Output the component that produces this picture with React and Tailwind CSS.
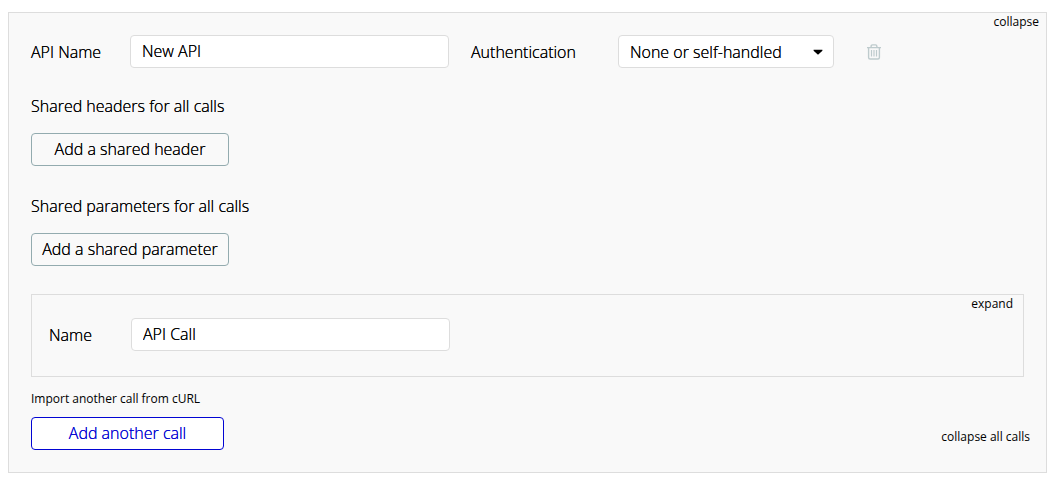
import {useState} from 'react';

export default function App() {
    const [apiName, setApiName] = useState("New API");
    const [authentication, setAuthentication] = useState("none");
    const [callName, setCallName] = useState("API Call");

    return (
        <main className="pt-3 pl-2 pr-1.5 pb-2 font-['Open_Sans','Noto_Sans',sans-serif] font-light text-base leading-5 text-black [text-shadow:0_0_0_currentColor]">
            <section className="border border-[#dddddd] bg-[#f9f9f9] pb-[22px]">
                <div className="flex justify-end pr-[7px]">
                    <TextLink>collapse</TextLink>
                </div>

                <div className="px-[22px] pt-1">
                    {/* API settings */}
                    <div className="flex items-center">
                        <label htmlFor="api-name" className="w-[99px] shrink-0">API Name</label>
                        <TextField id="api-name" value={apiName} onChange={setApiName}/>

                        <label htmlFor="authentication" className="w-[147px] shrink-0 ml-[22px]">Authentication</label>
                        <div className="grid w-[216px] shrink-0 items-center">
                            <select
                                id="authentication"
                                className="col-start-1 row-start-1 h-[33px] w-full appearance-none rounded border border-[#dddddd] bg-white pl-[11px] pr-7 [text-shadow:inherit]"
                                value={authentication}
                                onChange={(e) => setAuthentication(e.target.value)}
                            >
                                <option value="none">None or self-handled</option>
                                <option value="header">Private key in header</option>
                                <option value="url">Private key in URL</option>
                                <option value="basic">HTTP Basic Auth</option>
                            </select>
                            <svg viewBox="0 0 10 6" className="pointer-events-none col-start-1 row-start-1 mr-[11px] h-1.5 w-2.5 justify-self-end">
                                <path d="M0.6 0.8h8.8v1L5.6 5.3q-.6.5-1.2 0L.6 1.8z"/>
                            </svg>
                        </div>

                        <button type="button" aria-label="Delete API" className="ml-[33px] shrink-0">
                            <TrashIcon/>
                        </button>
                    </div>

                    {/* Shared headers and parameters */}
                    <h2 className="mt-7 mb-[17px] font-light">Shared headers for all calls</h2>
                    <SharedButton>Add a shared header</SharedButton>

                    <h2 className="mt-[30px] mb-[17px] font-light">Shared parameters for all calls</h2>
                    <SharedButton>Add a shared parameter</SharedButton>

                    {/* Calls */}
                    <article className="mt-7 border border-[#dddddd] pb-[25px]">
                        <div className="flex justify-end pr-2.5">
                            <TextLink>expand</TextLink>
                        </div>
                        <div className="flex items-center pt-[5px] pl-[17px]">
                            <label htmlFor="call-name" className="w-[82px] shrink-0">Name</label>
                            <TextField id="call-name" value={callName} onChange={setCallName}/>
                        </div>
                    </article>

                    <div className="mt-[13px] flex items-end justify-between">
                        <div className="flex flex-col items-start gap-[9px]">
                            <TextLink>Import another call from cURL</TextLink>
                            <button
                                type="button"
                                className="h-[33px] w-[193px] rounded border border-[#0205d3] bg-white pb-0.5 text-[#0205d3] [text-shadow:0_0_0_currentColor]"
                            >
                                Add another call
                            </button>
                        </div>
                        <div className="-mr-1.5 pb-1">
                            <TextLink>collapse all calls</TextLink>
                        </div>
                    </div>
                </div>
            </section>
        </main>
    );
}


function TextLink({children}) {
    return (
        <a href="#" className="block text-xs font-normal leading-[18px] [text-shadow:none]">{children}</a>
    );
}

function TextField({id, value, onChange}) {
    return (
        <input
            id={id}
            type="text"
            className="h-[33px] w-[319px] rounded border border-[#dddddd] bg-white px-[11px] pb-0.5 [text-shadow:inherit]"
            value={value}
            onChange={(e) => onChange(e.target.value)}
        />
    );
}

function SharedButton({children}) {
    return (
        <button type="button" className="block h-[33px] w-[198px] rounded border border-[#93abaf] pb-0.5 [text-shadow:inherit]">
            {children}
        </button>
    );
}

function TrashIcon() {
    return (
        <svg viewBox="0 0 14 16" className="block h-4 w-3.5" fill="none" stroke="#becbcd">
            <path d="M0 3.6h14M4.1 3.5V2.4Q4.1 0.9 5.5 0.9h3Q9.9 0.9 9.9 2.4V3.5" strokeWidth="1.4"/>
            <path d="M1.6 3.5V13.5Q1.6 15 3.1 15h7.8Q12.4 15 12.4 13.5V3.5" strokeWidth="1.4"/>
            <path d="M4.5 6v6.5M7 6v6.5M9.5 6v6.5" strokeWidth="1.2"/>
        </svg>
    );
}
